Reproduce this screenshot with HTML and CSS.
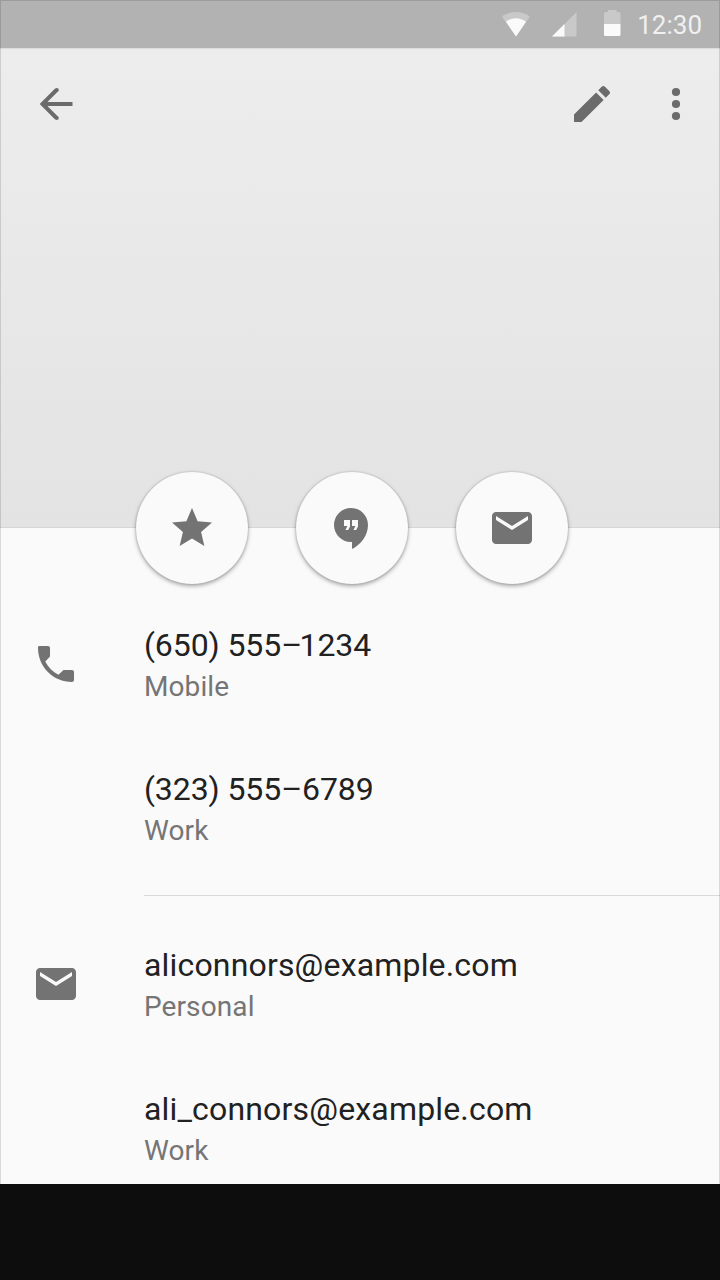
FILE: index.html
```html
<!DOCTYPE html>
<html lang="en">
<head>
<meta charset="utf-8">
<title>Contact</title>
<link rel="stylesheet" href="styles.css">
</head>
<body>
<div class="screen">
  <header class="hero">
    <div class="status">
      <svg class="wifi" viewBox="0 0 28 25"><path class="dim" d="M0 4.500C8-1.500 20-1.500 28 4.500L14 24.500z"/><path class="lit" d="M4 9.800C10 4.900 18 4.900 24 9.800L14 24.500z"/></svg>
      <svg class="signal" viewBox="0 0 25 25"><path class="dim" d="M24.500 0v24.500H0z"/><path class="lit" d="M12.500 12v12.500H0z"/></svg>
      <svg class="battery" viewBox="0 0 17 26"><path class="dim" d="M4 0h8.500v2H15q1.500 0 1.500 1.500V14H0V3.500Q0 2 1.500 2H4z"/><path class="lit" d="M0 14h16.500v10.500q0 1.500-1.500 1.500H1.500Q0 26 0 24.500z"/></svg>
      <span class="clock">12:30</span>
    </div>
    <nav class="toolbar">
      <svg class="icon back" viewBox="0 0 48 48"><path d="M24.500 10 10.500 24l14 14M11 24h29.500" fill="none" stroke="currentColor" stroke-width="4"/><circle cx="24.800" cy="10" r="2"/><circle cx="24.800" cy="38" r="2"/></svg>
      <svg class="icon" viewBox="0 0 24 24"><path d="M3 17.250V21h3.750L17.810 9.940l-3.750-3.750L3 17.250zM20.710 7.040c.39-.39.39-1.020 0-1.410l-2.340-2.340c-.39-.39-1.020-.39-1.410 0l-1.830 1.830 3.750 3.750 1.830-1.830z"/></svg>
      <svg class="icon more" viewBox="0 0 24 24"><circle cx="12" cy="6" r="2.050"/><circle cx="12" cy="12" r="2.050"/><circle cx="12" cy="18" r="2.050"/></svg>
    </nav>
    <div class="actions">
      <button class="fab" aria-label="Star"><svg class="icon" viewBox="0 0 24 24"><path d="M12 17.270 18.180 21l-1.640-7.030L22 9.240l-7.190-.61L12 2 9.190 8.630 2 9.240l5.460 4.730L5.820 21z"/></svg></button>
      <button class="fab" aria-label="Hangouts"><svg class="icon" viewBox="0 0 48 48"><path fill-rule="evenodd" d="M23 4A17 17 0 0 0 6 21C6 30.400 13.600 38 23 38H24v7c9-4.400 16-13.500 16-24C40 11.500 32.500 4 23 4zM16 16h6v6.500L20.200 26h-2.700l1.800-4H16zm8 0h6v6.500L28.200 26h-2.700l1.800-4H24z"/></svg></button>
      <button class="fab" aria-label="Email"><svg class="icon" viewBox="0 0 24 24"><path d="M20 4H4c-1.100 0-2 .9-2 2v12c0 1.100.9 2 2 2h16c1.100 0 2-.9 2-2V6c0-1.100-.9-2-2-2zm0 4-8 5-8-5V6l8 5 8-5v2z"/></svg></button>
    </div>
  </header>
  <main class="details">
    <section class="group phones">
      <svg class="icon lead" viewBox="0 0 24 24"><path d="M6.620 10.790c1.440 2.830 3.760 5.140 6.590 6.590L15.500 15.200c.15-.13.300-.2.500-.2h4c.55 0 1 .45 1 1v4c0 .55-.45 1-1 1-9.390 0-17-7.610-17-17 0-.55.100-1 .500-1H8c.55 0 1 .45 1 1v4c0 .200-.07.370-.2.500z"/></svg>
      <div class="rows">
        <div class="row"><div class="value">(650) 555<span class="dash">–</span>1234</div><div class="label">Mobile</div></div>
        <div class="row"><div class="value">(323) 555–6789</div><div class="label">Work</div></div>
      </div>
    </section>
    <section class="group emails">
      <svg class="icon lead" viewBox="0 0 24 24"><path d="M20 4H4c-1.100 0-2 .9-2 2v12c0 1.100.9 2 2 2h16c1.100 0 2-.9 2-2V6c0-1.100-.9-2-2-2zm0 4-8 5-8-5V6l8 5 8-5v2z"/></svg>
      <div class="rows">
        <div class="row"><div class="value">aliconnors@example.com</div><div class="label">Personal</div></div>
        <div class="row"><div class="value">ali_connors@example.com</div><div class="label">Work</div></div>
      </div>
    </section>
  </main>
</div>
<footer class="navbar"></footer>
</body>
</html>
```
FILE: styles.css
```css
* { box-sizing: border-box; }
body {
  margin: 0;
  width: 720px;
  height: 1280px;
  overflow: hidden;
  background: #0d0d0d;
  font-family: Roboto, "Liberation Sans", sans-serif;
}
.screen {
  position: relative;
  height: 1184px;
  overflow: hidden;
  background: #fafafa;
}
/* hairline frame over the whole screen */
.screen::after {
  content: "";
  position: absolute;
  inset: 0;
  border: 1px solid rgba(0, 0, 0, .13);
  border-bottom: 0;
  pointer-events: none;
}
.hero {
  height: 528px;
  display: flex;
  flex-direction: column;
  background: linear-gradient(#ededed 48px, #e3e3e3);
  border-bottom: 1px solid #d6d6d6;
}
.status {
  height: 48px;
  display: flex;
  align-items: flex-start;
  padding: 0 18px 0 502px;
  background: #b2b2b2;
  box-shadow: 0 1px #dcdcdc;
  flex: none;
}
.dim { fill: #c9c9c9; }
.lit { fill: #fafafa; }
.wifi { width: 28px; height: 25px; margin-top: 12px; }
.signal { width: 25px; height: 25px; margin: 12px 0 0 22px; }
.battery { width: 17px; height: 26px; margin: 10px 0 0 27px; }
.clock {
  margin-left: auto;
  font-size: 26px;
  line-height: 51px;
  color: #f0f0f0;
}
.icon {
  display: block;
  width: 48px;
  height: 48px;
  flex: none;
  fill: currentColor;
}
.toolbar {
  display: flex;
  padding: 32px 20px 0 32px;
  color: #6b6b6b;
}
.back { margin-right: auto; }
.more { margin-left: 36px; }
.actions {
  display: flex;
  gap: 48px;
  margin: auto 0 -57px 136px;
}
.fab {
  width: 112px;
  height: 112px;
  padding: 0;
  border: 0;
  border-radius: 50%;
  display: grid;
  place-items: center;
  background: #fafafa;
  color: #737373;
  box-shadow: 0 0 2px rgba(0, 0, 0, .2), 0 2px 4px rgba(0, 0, 0, .34);
}
.details { padding-top: 72px; }
.group {
  display: flex;
  padding-left: 32px;
  gap: 64px;
}
.lead { margin-top: 40px; color: #737373; }
.rows { flex: 1; padding-bottom: 7px; }
.row { height: 144px; padding-top: 24px; }
.value { font-size: 32px; line-height: 42px; color: #212121; white-space: nowrap; }
.label { font-size: 28px; line-height: 42px; letter-spacing: .1px; color: #757575; }
.phones .rows { border-bottom: 1px solid #dadada; }
.phones .value { letter-spacing: -.09px; }
.dash { letter-spacing: -2.600px; }
.emails { margin-top: 24px; }
.emails .value { letter-spacing: .17px; }
.navbar { height: 96px; background: #0d0d0d; }
```
